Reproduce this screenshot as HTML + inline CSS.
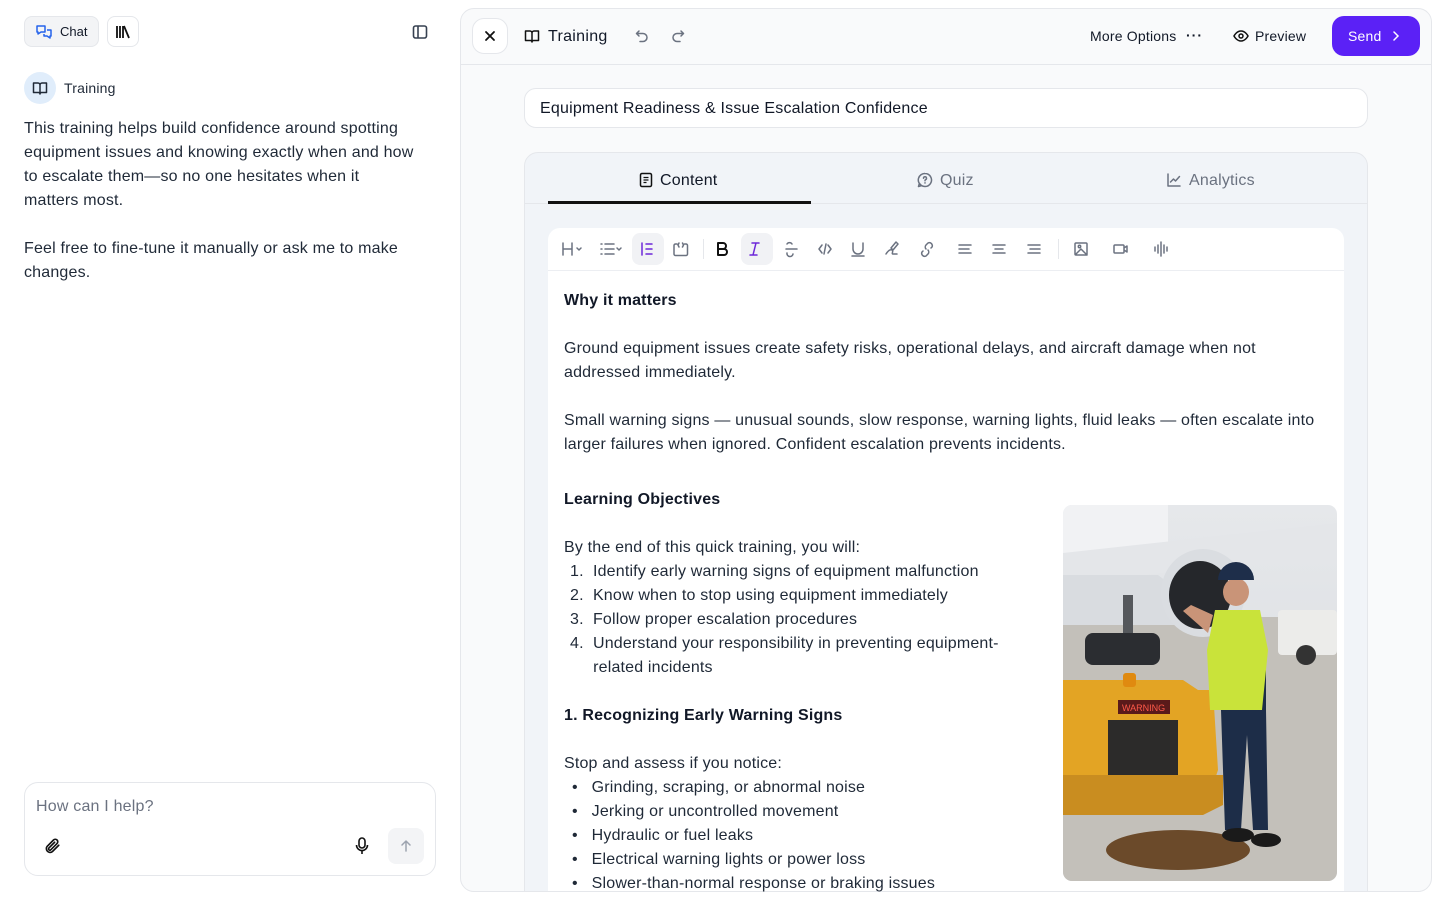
<!DOCTYPE html>
<html><head><meta charset="utf-8"><style>
*{box-sizing:border-box;margin:0;padding:0}
body{width:1440px;height:900px;overflow:hidden;background:#fff;font-family:"Liberation Sans",sans-serif;color:#111827;position:relative}
.a{position:absolute}
.t{font-size:16px;line-height:24px;white-space:nowrap;letter-spacing:0.18px}
svg{display:block}
.ic{stroke:#6b7280;fill:none;stroke-width:1.5;stroke-linecap:round;stroke-linejoin:round}
</style></head><body>
<!-- left panel -->
<div class="a" style="left:24px;top:16px;width:75px;height:31px;border:1px solid #e5e7eb;border-radius:8px;background:#f3f4f6"></div>
<svg class="a" style="left:35px;top:23px" width="18" height="18" viewBox="0 0 18 18"><path d="M2 3h8v6H6l-3 2V9H2z M12 7h4v6h-1v2l-3-2H9v-2" fill="none" stroke="#2563eb" stroke-width="1.5" stroke-linejoin="round"/></svg>
<div class="a" style="left:60px;top:23px;font-size:13px;line-height:18px">Chat</div>
<div class="a" style="left:107px;top:16px;width:32px;height:31px;border:1px solid #e5e7eb;border-radius:8px;background:#fff"></div>
<svg class="a" style="left:115px;top:24px" width="16" height="16" viewBox="0 0 16 16"><path d="M2 2v12M5 2v12M8 2v12M9 2l5 12" stroke="#111" stroke-width="1.8" fill="none"/></svg>
<svg class="a" style="left:412px;top:24px" width="16" height="16" viewBox="0 0 16 16"><rect x="1.5" y="2" width="13" height="12" rx="2" fill="none" stroke="#374151" stroke-width="1.6"/><path d="M6 2v12" stroke="#374151" stroke-width="1.6"/></svg>
<div class="a" style="left:24px;top:72px;width:32px;height:32px;border-radius:16px;background:#e0edfb"></div>
<svg class="a" style="left:32px;top:80px" width="16" height="16" viewBox="0 0 16 16"><path d="M1.5 3h4.5a2 2 0 0 1 2 2v9a1.5 1.5 0 0 0-1.5-1.5H1.5zM14.5 3H10a2 2 0 0 0-2 2v9a1.5 1.5 0 0 1 1.5-1.5h5z" fill="none" stroke="#1f2937" stroke-width="1.5" stroke-linejoin="round"/></svg>
<div class="a" style="left:64px;top:79px;font-size:14px;line-height:18px;color:#1f2937;letter-spacing:0.2px">Training</div>
<div class="a t" style="left:24px;top:117px;color:#1f2937">This training helps build confidence around spotting<br>equipment issues and knowing exactly when and how<br>to escalate them—so no one hesitates when it<br>matters most.<br><br>Feel free to fine-tune it manually or ask me to make<br>changes.</div>
<div class="a" style="left:24px;top:782px;width:412px;height:94px;border:1px solid #e5e7eb;border-radius:14px"></div>
<div class="a" style="left:36px;top:797px;font-size:16px;line-height:20px;color:#6b7280;letter-spacing:0.2px">How can I help?</div>
<svg class="a" style="left:43px;top:837px" width="18" height="18" viewBox="0 0 24 24"><path d="M21 11l-8.5 8.5a5 5 0 0 1-7-7L14 4a3.3 3.3 0 0 1 4.7 4.7l-8.5 8.5a1.7 1.7 0 0 1-2.4-2.4L15.5 7" fill="none" stroke="#111" stroke-width="2.2" stroke-linecap="round"/></svg>
<svg class="a" style="left:354px;top:837px" width="16" height="18" viewBox="0 0 16 18"><rect x="5" y="1" width="6" height="10" rx="3" fill="none" stroke="#111" stroke-width="1.6"/><path d="M2.5 8a5.5 5.5 0 0 0 11 0M8 13.5V17" fill="none" stroke="#111" stroke-width="1.6"/></svg>
<div class="a" style="left:388px;top:828px;width:36px;height:36px;border-radius:8px;background:#f3f4f6"></div>
<svg class="a" style="left:398px;top:838px" width="16" height="16" viewBox="0 0 16 16"><path d="M8 13V3M4 7l4-4 4 4" fill="none" stroke="#9ca3af" stroke-width="1.5" stroke-linecap="round"/></svg>

<!-- right panel -->
<div class="a" style="left:460px;top:8px;width:972px;height:884px;border:1px solid #e5e7eb;border-radius:14px;background:#f9fafb;overflow:hidden">
  <div class="a" style="left:0;top:55px;width:972px;height:1px;background:#e5e7eb"></div>
  <div class="a" style="left:63px;top:79px;width:844px;height:40px;border:1px solid #e5e7eb;border-radius:12px;background:#fff"></div>
  <div class="a" style="left:63px;top:143px;width:844px;height:780px;border:1px solid #e5e7eb;border-radius:14px;background:#f1f4f8"></div>
  <div class="a" style="left:64px;top:194px;width:842px;height:1px;background:#e5e7eb"></div>
  <div class="a" style="left:87px;top:192px;width:263px;height:3px;background:#111"></div>
  <div class="a" style="left:87px;top:219px;width:796px;height:700px;background:#fff;border-radius:12px 12px 0 0"></div>
  <div class="a" style="left:87px;top:261px;width:796px;height:1px;background:#eceef2"></div>
</div>
<div class="a" style="left:472px;top:18px;width:36px;height:36px;border:1px solid #e5e7eb;border-radius:12px;background:#fff"></div>
<svg class="a" style="left:483px;top:29px" width="14" height="14" viewBox="0 0 14 14"><path d="M3 3l8 8M11 3l-8 8" stroke="#111" stroke-width="1.8" stroke-linecap="round"/></svg>
<svg class="a" style="left:524px;top:28px" width="16" height="16" viewBox="0 0 16 16"><path d="M1.5 3h4.5a2 2 0 0 1 2 2v9a1.5 1.5 0 0 0-1.5-1.5H1.5zM14.5 3H10a2 2 0 0 0-2 2v9a1.5 1.5 0 0 1 1.5-1.5h5z" fill="none" stroke="#111" stroke-width="1.5" stroke-linejoin="round"/></svg>
<div class="a" style="left:548px;top:27px;font-size:16px;line-height:20px;font-weight:500;letter-spacing:0.3px">Training</div>
<svg class="a" style="left:634px;top:28px" width="16" height="16" viewBox="0 0 16 16"><path d="M5 3L2.5 5.5 5 8M2.5 5.5H9a4 4 0 0 1 0 8H6" class="ic" stroke="#9ca3af"/></svg>
<svg class="a" style="left:670px;top:28px" width="16" height="16" viewBox="0 0 16 16"><path d="M11 3l2.5 2.5L11 8M13.5 5.5H7a4 4 0 0 0 0 8h3" class="ic" stroke="#9ca3af"/></svg>
<div class="a" style="left:1090px;top:27px;font-size:14px;line-height:18px;letter-spacing:0.2px">More Options</div>
<div class="a" style="left:1186px;top:26px;font-size:14px;line-height:18px;letter-spacing:1px;font-weight:bold">···</div>
<svg class="a" style="left:1233px;top:28px" width="16" height="16" viewBox="0 0 16 16"><path d="M1 8s2.5-5 7-5 7 5 7 5-2.5 5-7 5-7-5-7-5z" fill="none" stroke="#111" stroke-width="1.5"/><circle cx="8" cy="8" r="2" fill="none" stroke="#111" stroke-width="1.5"/></svg>
<div class="a" style="left:1255px;top:27px;font-size:14px;line-height:18px;letter-spacing:0.2px">Preview</div>
<div class="a" style="left:1332px;top:16px;width:88px;height:40px;border-radius:12px;background:#5b21f6"></div>
<div class="a" style="left:1348px;top:27px;font-size:14px;line-height:18px;color:#fff;letter-spacing:0.2px">Send</div>
<svg class="a" style="left:1390px;top:30px" width="12" height="12" viewBox="0 0 12 12"><path d="M4 2l4 4-4 4" fill="none" stroke="#fff" stroke-width="1.5" stroke-linecap="round"/></svg>

<div class="a" style="left:540px;top:99px;font-size:16px;line-height:20px;font-weight:500;letter-spacing:0.2px">Equipment Readiness &amp; Issue Escalation Confidence</div>

<svg class="a" style="left:638px;top:172px" width="16" height="16" viewBox="0 0 16 16"><rect x="2.5" y="1.5" width="11" height="13" rx="1.5" fill="none" stroke="#111" stroke-width="1.5"/><path d="M5.5 5.5h5M5.5 8h5M5.5 10.5h3" stroke="#111" stroke-width="1.3"/></svg>
<div class="a" style="left:660px;top:171px;font-size:16px;line-height:20px;font-weight:500;letter-spacing:0.2px">Content</div>
<svg class="a" style="left:917px;top:172px" width="16" height="16" viewBox="0 0 16 16"><path d="M8 1.5a6.5 6.5 0 1 1-5.6 9.8L1.5 14.5l3-.9A6.5 6.5 0 0 1 8 1.5z" class="ic" stroke="#6b7280"/><path d="M6.5 6.3a1.5 1.5 0 1 1 2 1.4c-.5.2-.5.6-.5 1.1M8 10.8v.2" class="ic"/></svg>
<div class="a" style="left:940px;top:171px;font-size:16px;line-height:20px;color:#6b7280;letter-spacing:0.2px">Quiz</div>
<svg class="a" style="left:1166px;top:172px" width="16" height="16" viewBox="0 0 16 16"><path d="M2 2v12h12M4.5 10l3-3 2 2 4-4.5" class="ic"/></svg>
<div class="a" style="left:1189px;top:171px;font-size:16px;line-height:20px;color:#6b7280;letter-spacing:0.2px">Analytics</div>

<!-- toolbar -->
<div class="a" style="left:632px;top:233px;width:32px;height:32px;border-radius:8px;background:#f1f2f5"></div>
<div class="a" style="left:741px;top:233px;width:32px;height:32px;border-radius:8px;background:#f1f2f5"></div>
<div class="a" style="left:703px;top:239px;width:1px;height:20px;background:#e5e7eb"></div>
<div class="a" style="left:1058px;top:239px;width:1px;height:20px;background:#e5e7eb"></div>
<svg class="a" style="left:560px;top:240px" width="620" height="18" viewBox="0 0 620 18">
<g class="ic" stroke="#6b7280">
<path d="M3 3v12M12 3v12M3 9h9M17 8l2 2 2-2"/>
<path d="M41 4h1M41 9h1M41 14h1M45 4h9M45 9h9M45 14h9M57 8l2 2 2-2"/>
<path d="M82 3v12M86 4h6M86 9h6M86 14h6" stroke="#6d28d9"/>
<path d="M117 4h-1.5a1.5 1.5 0 0 0-1.5 1.5V14a1.5 1.5 0 0 0 1.5 1.5H126a1.5 1.5 0 0 0 1.5-1.5V5.5A1.5 1.5 0 0 0 126 4h-1.5M119 3l-1 2 1 2M122.5 3l1 2-1 2"/>
<path d="M158 3h5a3 3 0 0 1 0 6h-5zM158 9h6a3 3 0 0 1 0 6h-6z" stroke="#111" stroke-width="2"/>
<path d="M192 3h7M190 15h7M196 3l-3 12" stroke="#6d28d9"/>
<path d="M232 4a3 3 0 0 0-5 0M226 9h11M227 13a3 3 0 0 0 6 1"/>
<path d="M262 5l-3 4 3 4M268 5l3 4-3 4M266 4l-2 10"/>
<path d="M293 3v6a5 5 0 0 0 10 0V3M292 16h12"/>
<path d="M326 14c2-3 4-5 6-4s-1 4 1 4h4M333 10l5-6-2-2-5 6z"/>
<path d="M363 11l-1 1a3 3 0 0 0 4 4l2-2a3 3 0 0 0 0-4M371 8l1-1a3 3 0 0 0-4-4l-2 2a3 3 0 0 0 0 4"/>
<path d="M399 5h12M399 9h10M399 13h12"/>
<path d="M433 5h12M435 9h8M433 13h12"/>
<path d="M468 5h12M470 9h10M468 13h12"/>
<path d="M516 3h10a1 1 0 0 1 1 1v10a1 1 0 0 1-1 1h-10a1 1 0 0 1-1-1V4a1 1 0 0 1 1-1zM516 14l5-5 6 6"/><circle cx="519.5" cy="6.5" r="1.2"/>
<path d="M555 5h8a1 1 0 0 1 1 1v6a1 1 0 0 1-1 1h-8a1 1 0 0 1-1-1V6a1 1 0 0 1 1-1zM564 8l3-2v6l-3-2"/>
<path d="M595 7v4M598 5v8M601 2v14M604 5v8M607 7v4"/>
</g></svg>

<!-- content -->
<div class="a t" style="left:564px;top:289px;font-weight:bold">Why it matters</div>
<div class="a t" style="left:564px;top:337px;color:#1f2937">Ground equipment issues create safety risks, operational delays, and aircraft damage when not<br>addressed immediately.</div>
<div class="a t" style="left:564px;top:409px;color:#1f2937">Small warning signs — unusual sounds, slow response, warning lights, fluid leaks — often escalate into<br>larger failures when ignored. Confident escalation prevents incidents.</div>
<div class="a t" style="left:564px;top:488px;font-weight:bold">Learning Objectives</div>
<div class="a t" style="left:564px;top:536px;color:#1f2937">By the end of this quick training, you will:</div>
<div class="a t" style="left:570px;top:560px;color:#1f2937">1.&nbsp; Identify early warning signs of equipment malfunction<br>2.&nbsp; Know when to stop using equipment immediately<br>3.&nbsp; Follow proper escalation procedures<br>4.&nbsp; Understand your responsibility in preventing equipment-<br>&nbsp;&nbsp;&nbsp;&nbsp;&nbsp;related incidents</div>
<div class="a t" style="left:564px;top:704px;font-weight:bold">1. Recognizing Early Warning Signs</div>
<div class="a t" style="left:564px;top:752px;color:#1f2937">Stop and assess if you notice:</div>
<div class="a t" style="left:572px;top:776px;color:#1f2937">•&nbsp;&nbsp; Grinding, scraping, or abnormal noise<br>•&nbsp;&nbsp; Jerking or uncontrolled movement<br>•&nbsp;&nbsp; Hydraulic or fuel leaks<br>•&nbsp;&nbsp; Electrical warning lights or power loss<br>•&nbsp;&nbsp; Slower-than-normal response or braking issues</div>

<!-- image -->
<svg class="a" style="left:1063px;top:505px;border-radius:9px" width="274" height="376" viewBox="0 0 274 376">
<defs><linearGradient id="sk" x1="0" y1="0" x2="0" y2="1"><stop offset="0" stop-color="#e6e8eb"/><stop offset="1" stop-color="#d6d9dd"/></linearGradient></defs>
<rect width="274" height="376" fill="url(#sk)"/>
<rect y="112" width="274" height="264" fill="#c3c0ba"/>
<path d="M0 0h105v40L0 55z" fill="#f1f2f4"/>
<path d="M0 48L274 18v28L0 80z" fill="#e4e6e9"/>
<path d="M0 70h95l40 30v20H0z" fill="#d9dce0"/>
<ellipse cx="140" cy="88" rx="42" ry="44" fill="#dadde1"/>
<ellipse cx="137" cy="90" rx="31" ry="34" fill="#25272b"/>
<rect x="60" y="90" width="10" height="45" fill="#55585c"/>
<rect x="22" y="128" width="75" height="32" rx="8" fill="#2b2d31"/>
<rect x="215" y="105" width="59" height="45" rx="4" fill="#ececea"/>
<circle cx="243" cy="150" r="10" fill="#333"/>
<path d="M0 175h120l15 10 15 0 5 80-10 30H0z" fill="#e3a424"/>
<path d="M45 215h70v60H45z" fill="#2c2b2a"/>
<rect x="55" y="195" width="52" height="14" fill="#5a1a1a"/>
<text x="59" y="206" font-size="9" fill="#ff5a4a" font-family="Liberation Sans">WARNING</text>
<rect x="60" y="168" width="13" height="14" rx="3" fill="#e08a10"/>
<path d="M0 270h160v30l-20 10H0z" fill="#c98d20"/>
<ellipse cx="115" cy="345" rx="72" ry="20" fill="#6b4a2a"/>
<path d="M150 118h45l8 42v45h-55l-3-45z" fill="#1d2d48"/>
<path d="M152 105h45l8 40-6 60h-52l-3-60z" fill="#c9e33a"/>
<path d="M150 110l-22 -10 -8 6 25 22z" fill="#c99478"/>
<ellipse cx="173" cy="87" rx="13" ry="14" fill="#c99478"/>
<path d="M155 75a18 18 0 0 1 36 0z" fill="#1e2e4a"/>
<path d="M158 205h45l2 120h-15l-6-95-6 95h-16z" fill="#1d2d48"/>
<ellipse cx="175" cy="330" rx="16" ry="7" fill="#1a1a1a"/>
<ellipse cx="203" cy="335" rx="15" ry="7" fill="#1a1a1a"/>
</svg>
</body></html>
